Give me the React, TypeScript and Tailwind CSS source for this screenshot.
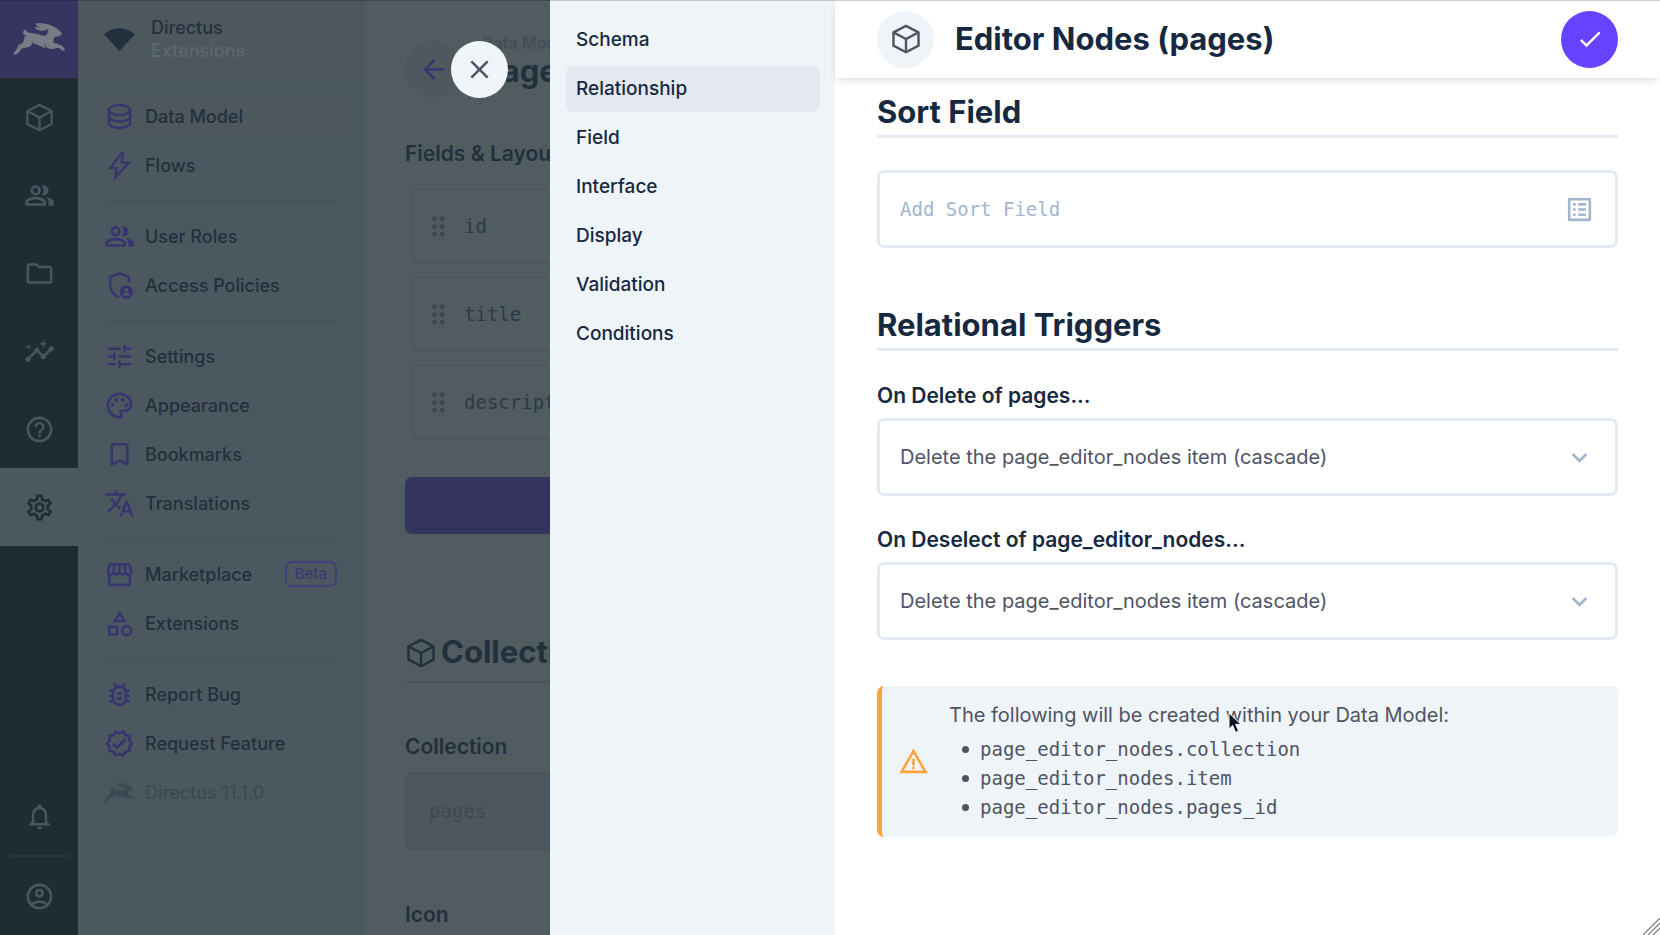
import type { ComponentType, ReactNode } from "react";
import {
  MdAdd,
  MdArrowBack,
  MdBookmarkBorder,
  MdCheck,
  MdClose,
  MdDragIndicator,
  MdExpandMore,
  MdHelpOutline,
  MdInsights,
  MdListAlt,
  MdNotificationsNone,
  MdOutlineAccountCircle,
  MdOutlineBugReport,
  MdOutlineCategory,
  MdOutlineFolder,
  MdOutlinePalette,
  MdOutlinePeopleAlt,
  MdOutlineSettings,
  MdOutlineStorefront,
  MdOutlineVerified,
  MdTranslate,
  MdTune,
  MdWarningAmber,
} from "react-icons/md";
import { SiDirectus } from "react-icons/si";

type IconType = ComponentType<{ className?: string }>;

function CubeIcon({ className }: { className?: string }) {
  return (
    <svg viewBox="0 0 24 24" fill="none" stroke="currentColor" strokeWidth="1.8" strokeLinejoin="round" className={className} aria-hidden="true">
      <path d="M12 2.2 21.400 7v10L12 21.900 2.600 17V7z" />
      <path d="M2.600 7 12 12 21.400 7M12 12v9.800" />
    </svg>
  );
}

function DatabaseIcon({ className }: { className?: string }) {
  return (
    <svg viewBox="0 0 24 24" fill="none" stroke="currentColor" strokeWidth="1.8" className={className} aria-hidden="true">
      <ellipse cx="12" cy="7" rx="8.200" ry="3.900" />
      <path d="M3.800 7v10c0 2.200 3.700 3.900 8.200 3.900s8.200-1.700 8.200-3.900V7M3.800 12c0 2.200 3.700 3.900 8.200 3.900s8.200-1.700 8.200-3.900" />
    </svg>
  );
}

function BoltIcon({ className }: { className?: string }) {
  return (
    <svg viewBox="0 0 24 24" fill="none" stroke="currentColor" strokeWidth="1.8" className={className} aria-hidden="true">
      <path d="M13.600 2.600 5 13.800h4.800L8.600 21.400 19.200 9.800h-5.500L14.800 2.600z" />
    </svg>
  );
}

function ShieldPersonIcon({ className }: { className?: string }) {
  return (
    <svg viewBox="0 0 24 24" fill="none" className={className} aria-hidden="true">
      <path d="M19.200 10V5.300L12 2.600 4.800 5.300V11c0 4.600 2.600 8.300 6.600 10" stroke="currentColor" strokeWidth="1.8" />
      <circle cx="17.300" cy="17" r="5.200" fill="currentColor" />
      <circle cx="17.300" cy="15.400" r="1.500" fill="#4c585f" />
      <path d="M14.500 18.900c.6-.9 1.600-1.300 2.800-1.300s2.200.4 2.800 1.300c-.6.9-1.600 1.400-2.800 1.400s-2.200-.5-2.800-1.400z" fill="#4c585f" />
    </svg>
  );
}

const railItems: { icon: IconType; label: string; active?: boolean }[] = [
  { icon: CubeIcon, label: "Content" },
  { icon: MdOutlinePeopleAlt, label: "User Directory" },
  { icon: MdOutlineFolder, label: "File Library" },
  { icon: MdInsights, label: "Insights" },
  { icon: MdHelpOutline, label: "Documentation" },
  { icon: MdOutlineSettings, label: "Settings", active: true },
];

const navGroups: { icon: IconType; label: string; beta?: boolean; active?: boolean; muted?: boolean }[][] = [
  [
    { icon: DatabaseIcon, label: "Data Model", active: true },
    { icon: BoltIcon, label: "Flows" },
  ],
  [
    { icon: MdOutlinePeopleAlt, label: "User Roles" },
    { icon: ShieldPersonIcon, label: "Access Policies" },
  ],
  [
    { icon: MdTune, label: "Settings" },
    { icon: MdOutlinePalette, label: "Appearance" },
    { icon: MdBookmarkBorder, label: "Bookmarks" },
    { icon: MdTranslate, label: "Translations" },
  ],
  [
    { icon: MdOutlineStorefront, label: "Marketplace", beta: true },
    { icon: MdOutlineCategory, label: "Extensions" },
  ],
  [
    { icon: MdOutlineBugReport, label: "Report Bug" },
    { icon: MdOutlineVerified, label: "Request Feature" },
    { icon: SiDirectus, label: "Directus 11.1.0", muted: true },
  ],
];

const drawerTabs = ["Schema", "Relationship", "Field", "Interface", "Display", "Validation", "Conditions"];

const createdFields = ["page_editor_nodes.collection", "page_editor_nodes.item", "page_editor_nodes.pages_id"];

function Rail() {
  return (
    <nav aria-label="Modules" className="flex w-[78px] shrink-0 flex-col bg-[#202c34] text-[#49565f]">
      <a href="#home" aria-label="Directus" className="flex h-[78px] items-center justify-center bg-[#37345f] text-[#757c86]">
        <SiDirectus className="size-[52px]" />
      </a>
      {railItems.map(({ icon: Icon, label, active }) => (
        <a
          key={label}
          href="#module"
          aria-label={label}
          className={active ? "flex h-[78px] items-center justify-center bg-[#4c585f] text-[#202c36]" : "flex h-[78px] items-center justify-center"}
        >
          <Icon className="size-[31px]" />
        </a>
      ))}
      <div className="mt-auto flex flex-col items-center">
        <button type="button" aria-label="Notifications" className="flex h-[78px] w-full items-center justify-center">
          <MdNotificationsNone className="size-[31px]" />
        </button>
        <div className="h-0.5 w-[57px] bg-[#2c3941]" />
        <button type="button" aria-label="Profile" className="flex h-[78px] w-full items-center justify-center">
          <MdOutlineAccountCircle className="size-[31px]" />
        </button>
      </div>
    </nav>
  );
}

function SettingsNav() {
  return (
    <aside className="flex w-[287px] shrink-0 flex-col bg-[#4c585f]">
      <div className="flex h-[78px] items-center gap-4 bg-[#4d575e] pl-[26px] text-[18px] leading-[23px] font-medium">
        <svg viewBox="0 0 31 23" className="h-[23px] w-[31px] text-[#22303d]" fill="currentColor" aria-hidden="true">
          <path d="M0 6.500C9-1.900 22-1.900 31 6.500L15.500 23z" />
        </svg>
        <div>
          <div className="text-[#22303d]">Directus</div>
          <div className="text-[#5b6872]">Extensions</div>
        </div>
      </div>
      <nav aria-label="Settings" className="px-4 pt-[15px]">
        {navGroups.map((group, index) => (
          <div key={group[0].label}>
            {index > 0 && <div className="mx-3 mt-3 mb-[11px] h-0.5 bg-[#48545b]" />}
            <div className="flex flex-col gap-[3px]">
              {group.map(({ icon: Icon, label, beta, active, muted }) => (
                <a
                  key={label}
                  href="#settings"
                  className={
                    active
                      ? "flex h-[46px] items-center rounded-[7px] bg-[#4d575e] px-[10px] text-[18px] font-medium text-[#22303d]"
                      : muted
                        ? "flex h-[46px] items-center px-[10px] text-[18px] font-medium text-[#3c4953]"
                        : "flex h-[46px] items-center px-[10px] text-[18px] font-medium text-[#22303d]"
                  }
                >
                  <Icon className={muted ? "size-[31px] shrink-0" : "size-[31px] shrink-0 text-[#38356e]"} />
                  <span className="ml-[10px] grow">{label}</span>
                  {beta && (
                    <span className="mr-0.5 rounded-[7px] border-2 border-[#423f79] px-2 text-[15px] leading-[22px] text-[#3b386f]">Beta</span>
                  )}
                </a>
              ))}
            </div>
          </div>
        ))}
      </nav>
    </aside>
  );
}

function DataModelPage() {
  return (
    <main className="min-w-0 grow overflow-hidden bg-[#515c60] px-10 text-[#22303d]">
      <header className="flex items-start gap-5 pt-[33px]">
        <button type="button" aria-label="Back" className="mt-2 flex size-[57px] items-center justify-center rounded-full bg-[#4f585f] text-[#38356e]">
          <MdArrowBack className="size-[31px]" />
        </button>
        <div>
          <div className="text-base leading-5 font-semibold text-[#414e58]">Data Model</div>
          <h1 className="text-[31px] leading-9 font-bold">Pages</h1>
        </div>
      </header>
      <h2 className="mt-[42px] text-[21px] leading-7 font-semibold whitespace-nowrap">Fields &amp; Layout</h2>
      <ul className="mt-5 ml-[7px] flex flex-col gap-3">
        {["id", "title", "description"].map((name) => (
          <li key={name} className="flex h-[76px] items-center gap-[10px] rounded-[7px] border-2 border-[#4b575e] pl-[9px] font-['DejaVu_Sans_Mono',monospace] text-[19px] text-[#2d3a46]">
            <MdDragIndicator className="size-[31px] text-[#3c4953]" />
            {name}
          </li>
        ))}
      </ul>
      <button type="button" aria-label="Create Field" className="mt-[37px] flex h-[57px] w-full items-center justify-center rounded-[7px] bg-[#35345f]">
        <MdAdd className="size-6" />
      </button>
      <h2 className="mt-[94px] flex h-[55px] items-center gap-1 border-b-2 border-[#49555c] pb-1 text-[31px] font-bold whitespace-nowrap">
        <CubeIcon className="size-8 shrink-0" />
        Collection Setup
      </h2>
      <label htmlFor="collection" className="mt-[50px] block text-[21px] leading-7 font-semibold">
        Collection
      </label>
      <input
        id="collection"
        readOnly
        value="pages"
        className="mt-[11px] block h-[78px] w-full rounded-[7px] border-2 border-[#49555c] bg-[#4d585e] px-[22px] font-['DejaVu_Sans_Mono',monospace] text-[19px] text-[#3c4953]"
      />
      <h3 className="mt-[51px] text-[21px] leading-7 font-semibold">Icon</h3>
    </main>
  );
}

function SectionTitle({ children }: { children: ReactNode }) {
  return <h2 className="border-b-[3px] border-[#e4eaf1] pb-[3px] text-[31px] leading-10 font-bold text-[#172940]">{children}</h2>;
}

function TriggerSelect({ id, label, option }: { id: string; label: string; option: string }) {
  return (
    <div>
      <label htmlFor={id} className="block text-[21px] leading-[30px] font-semibold text-[#172940]">
        {label}
      </label>
      <div className="mt-[7px] grid">
        <select
          id={id}
          className="col-start-1 row-start-1 h-[78px] w-full appearance-none rounded-[7px] border-[3px] border-[#e4eaf1] bg-white px-5 text-[20px] text-[#4f5464]"
        >
          <option>{option}</option>
        </select>
        <MdExpandMore className="pointer-events-none col-start-1 row-start-1 mr-[23px] size-[31px] self-center justify-self-end text-[#a2b5cd]" />
      </div>
    </div>
  );
}

function Drawer() {
  return (
    <section aria-label="Editor Nodes (pages)" className="absolute inset-y-0 right-0 flex w-[1110px] max-w-full">
      <button
        type="button"
        aria-label="Close"
        className="absolute top-[41px] right-full mr-[42px] flex size-[57px] items-center justify-center rounded-full bg-[#eff5f9] text-[#4f5464]"
      >
        <MdClose className="size-[31px]" />
      </button>
      <nav aria-label="Field settings" className="flex w-[285px] shrink-0 flex-col gap-[3px] bg-[#eff4f9] pt-[17px] pr-[15px] pl-4">
        {drawerTabs.map((tab) => (
          <a
            key={tab}
            href="#tab"
            className={
              tab === "Relationship"
                ? "flex h-[46px] items-center rounded-[7px] bg-[#e4e9f1] px-[10px] text-[19px] font-medium text-[#172940]"
                : "flex h-[46px] items-center rounded-[7px] px-[10px] text-[19px] font-medium text-[#172940]"
            }
          >
            {tab}
          </a>
        ))}
      </nav>
      <div className="flex min-w-0 grow flex-col bg-white">
        <header className="flex h-[78px] shrink-0 items-center gap-[21px] px-[42px] shadow-[0_4px_9px_-3px_rgba(0,0,0,0.18)]">
          <span className="flex size-[57px] items-center justify-center rounded-full bg-[#eff4f9] text-[#4f5464]">
            <CubeIcon className="size-8" />
          </span>
          <h1 className="grow text-[31px] font-bold text-[#172940]">Editor Nodes (pages)</h1>
          <button type="button" aria-label="Save" className="flex size-[57px] items-center justify-center rounded-full bg-[#6644ff] text-white">
            <MdCheck className="size-[28px]" />
          </button>
        </header>
        <div className="grow px-[42px] pt-[14px]">
          <SectionTitle>Sort Field</SectionTitle>
          <div className="mt-8 flex h-[78px] items-center rounded-[7px] border-[3px] border-[#e4eaf1] pr-5">
            <input
              aria-label="Sort field"
              placeholder="Add Sort Field"
              className="h-full min-w-0 grow bg-transparent px-5 font-['DejaVu_Sans_Mono',monospace] text-[19px] text-[#4f5464] outline-none placeholder:text-[#a2b5cd]"
            />
            <button type="button" aria-label="Select an existing field" className="text-[#a2b5cd]">
              <MdListAlt className="size-[31px]" />
            </button>
          </div>
          <div className="mt-[57px]">
            <SectionTitle>Relational Triggers</SectionTitle>
          </div>
          <div className="mt-[30px] flex flex-col gap-[29px]">
            <TriggerSelect id="on-delete" label="On Delete of pages..." option="Delete the page_editor_nodes item (cascade)" />
            <TriggerSelect id="on-deselect" label="On Deselect of page_editor_nodes..." option="Delete the page_editor_nodes item (cascade)" />
          </div>
          <div className="mt-[46px] flex items-center rounded-[7px] border-l-[5px] border-[#ffa439] bg-[#eff4f9] py-[15px] pl-4 leading-[29px] text-[#4f5464]">
            <MdWarningAmber className="size-[31px] shrink-0 text-[#ffa439]" />
            <div className="ml-5">
              <p className="text-[20px]">The following will be created within your Data Model:</p>
              <ul className="mt-[5px] pl-[13px] font-['DejaVu_Sans_Mono',monospace] text-[19px]">
                {createdFields.map((field) => (
                  <li key={field} className="flex items-center gap-[11px]">
                    <span className="size-[7px] rounded-full bg-[#4f5464]" />
                    {field}
                  </li>
                ))}
              </ul>
            </div>
          </div>
        </div>
      </div>
    </section>
  );
}

export default function App() {
  return (
    <div className="relative flex h-screen overflow-hidden font-['Inter',sans-serif]">
      <Rail />
      <SettingsNav />
      <DataModelPage />
      <Drawer />
      <div className="pointer-events-none absolute inset-x-0 top-0 h-px bg-black/20" />
      <svg viewBox="0 0 14 22" className="pointer-events-none absolute top-[712px] left-[1228px] h-[22px] w-[14px]" aria-hidden="true">
        <path d="M1 1v16l3.700-3.500 2.900 6.900 3-1.300-2.900-6.700H13z" fill="#0b1220" stroke="#fff" strokeWidth="1" />
      </svg>
      <svg viewBox="0 0 17 17" className="pointer-events-none absolute right-0 bottom-0 size-[17px]" stroke="#858585" strokeWidth="1.3" aria-hidden="true">
        <path d="M0 17 17 0M5 17 17 5M10 17l7-7" />
      </svg>
    </div>
  );
}
